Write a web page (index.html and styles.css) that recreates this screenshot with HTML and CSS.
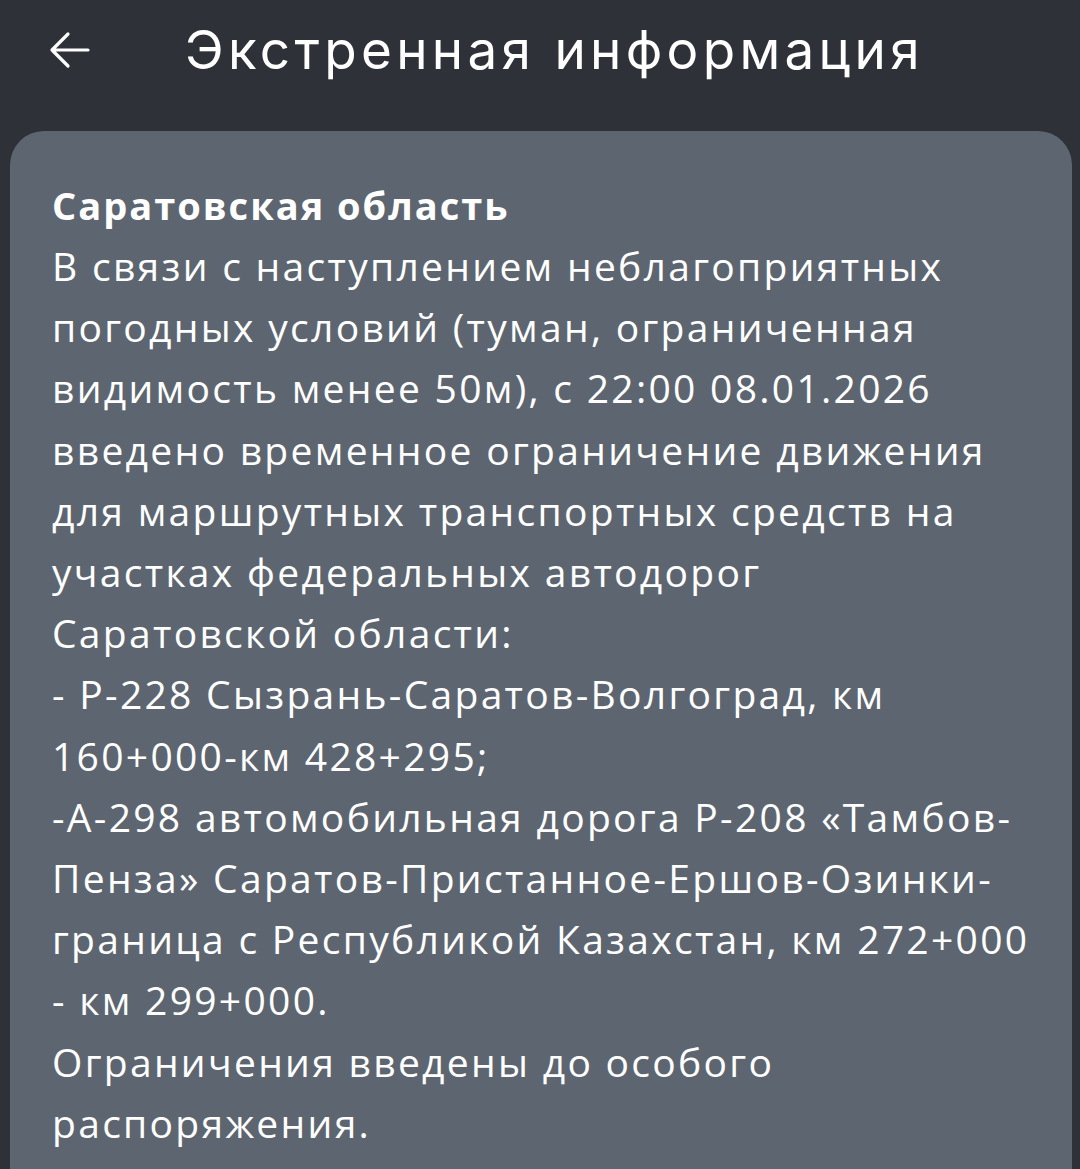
FILE: index.html
```
<!DOCTYPE html>
<html lang="ru">
<head>
<meta charset="UTF-8">
<meta name="viewport" content="width=device-width, initial-scale=1.0">
<title>Экстренная информация</title>
<link rel="stylesheet" href="styles.css">
</head>
<body>
<div class="header">
    <svg class="back" width="42" height="40" viewBox="0 0 42 40">
        <path d="M39 20H3M19 4L3 20L19 36" fill="none" stroke="#ffffff" stroke-width="3.2" stroke-linecap="round" stroke-linejoin="round"/>
    </svg>
    <h1 class="title">Экстренная информация</h1>
</div>

<div class="card">
    <div class="region">Саратовская область</div>
    <div class="text">В связи с наступлением неблагоприятных погодных условий (туман, ограниченная видимость менее 50м), с 22:00 08.01.2026 введено временное ограничение движения для маршрутных транспортных средств на участках федеральных автодорог Саратовской области:<br>- Р-228 Сызрань-Саратов-Волгоград, км 160+000-км 428+295;<br>-А-298 автомобильная дорога Р-208 «Тамбов-Пенза» Саратов-Пристанное-Ершов-Озинки-граница с Республикой Казахстан, км 272+000 - км 299+000.<br>Ограничения введены до особого распоряжения.</div>
</div>
</body>
</html>
```

FILE: styles.css
```
body {
    margin: 0;
    padding: 0;
    background-color: #2e3138;
    font-family: "Open Sans", "Noto Sans", sans-serif;
    color: #ffffff;
    height: 100vh;
    display: flex;
    flex-direction: column;
    overflow: hidden;
}
.header {
    display: flex;
    align-items: center;
    flex-shrink: 0;
    height: 100px;
    padding-left: 49px;
    margin-bottom: 31px;
}
.back {
    flex-shrink: 0;
}
.title {
    margin: 0 0 0 94px;
    font-family: Inter, "Noto Sans", sans-serif;
    font-weight: 400;
    font-size: 53px;
    letter-spacing: 4.3px;
}
.card {
    flex: 1;
    margin: 0 8px 0 10px;
    background-color: #5d6670;
    border-radius: 34px 34px 0 0;
    padding: 44px 30px 0 42px;
}
.region {
    font-weight: 700;
    font-size: 38px;
    line-height: 60px;
    letter-spacing: 2px;
}
.text {
    font-size: 39px;
    line-height: 61.2px;
    letter-spacing: 2.3px;
}
```
